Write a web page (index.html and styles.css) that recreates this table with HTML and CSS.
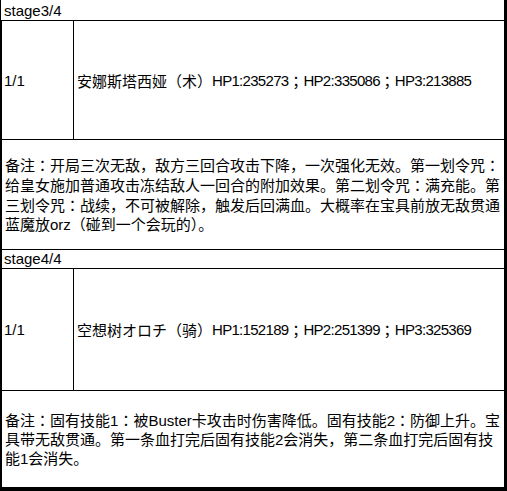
FILE: index.html
```html
<!DOCTYPE html>
<html lang="zh-CN">
<head>
<meta charset="utf-8">
<link rel="stylesheet" href="styles.css">
</head>
<body>
<div class="sheet">
  <div class="stage first">stage3/4</div>
  <div class="data row-a">
    <div class="idx">1/1</div>
    <div class="name">安娜斯塔西娅（术）<span class="num">HP1:235273</span><span class="pc" lang="zh-TW">；</span><span class="num">HP2:335086</span><span class="pc" lang="zh-TW">；</span><span class="num">HP3:213885</span></div>
  </div>
  <div class="note note-a">
    <p>备注<span class="pc" lang="zh-TW">：</span>开局三次无敌，敌方三回合攻击下降，一次强化无效。第一划令咒<span class="pc" lang="zh-TW">：</span><br>给皇女施加普通攻击冻结敌人一回合的附加效果。第二划令咒<span class="pc" lang="zh-TW">：</span>满充能。第<br>三划令咒<span class="pc" lang="zh-TW">：</span>战续，不可被解除，触发后回满血。大概率在宝具前放无敌贯通<br>蓝魔放orz（碰到一个会玩的）。</p>
  </div>
  <div class="stage">stage4/4</div>
  <div class="data row-b">
    <div class="idx">1/1</div>
    <div class="name">空想树オロチ（骑）<span class="num">HP1:152189</span><span class="pc" lang="zh-TW">；</span><span class="num">HP2:251399</span><span class="pc" lang="zh-TW">；</span><span class="num">HP3:325369</span></div>
  </div>
  <div class="note note-b">
    <p>备注<span class="pc" lang="zh-TW">：</span>固有技能1<span class="pc" lang="zh-TW">：</span>被Buster卡攻击时伤害降低。固有技能2<span class="pc" lang="zh-TW">：</span>防御上升。宝<br>具带无敌贯通。第一条血打完后固有技能2会消失，第二条血打完后固有技<br>能1会消失。</p>
  </div>
</div>
</body>
</html>
```
FILE: styles.css
```css
html, body {
  margin: 0;
  padding: 0;
  background: #fff;
}
body {
  font-family: "Liberation Sans", "Noto Sans CJK SC", sans-serif;
  font-size: 15px;
  color: #000;
}
.sheet {
  width: 507px;
  height: 491px;
  box-sizing: border-box;
  border-right: 3px solid #000;
  border-bottom: 4px solid #000;
  display: flex;
  flex-direction: column;
  overflow: hidden;
}
.stage {
  flex-shrink: 0;
  height: 18px;
  line-height: 18px;
  padding-left: 2px;
  border-left: 2px solid #000;
  border-bottom: 1px solid #000;
  white-space: nowrap;
}
.stage.first {
  height: 18px;
  padding-top: 2px;
  padding-left: 3px;
  border-left-width: 1px;
}
.data {
  flex-shrink: 0;
  display: flex;
  border-left: 2px solid #000;
  border-bottom: 1px solid #000;
}
.row-a { height: 118px; }
.row-b { height: 121px; }
.idx {
  width: 69px;
  padding-left: 2px;
  border-right: 1px solid #000;
  display: flex;
  align-items: center;
}
.name {
  flex: 1;
  padding-left: 3px;
  display: flex;
  align-items: center;
  white-space: nowrap;
}
.num {
  letter-spacing: -0.7px;
}
.pc {
  font-family: "Noto Sans CJK TC", "Noto Sans CJK SC", sans-serif;
}
.note {
  flex-shrink: 0;
  display: flex;
  align-items: center;
  padding-left: 3px;
  border-left: 2px solid #000;
  border-bottom: 1px solid #000;
}
.note p {
  margin: 0;
  line-height: 19px;
  white-space: nowrap;
}
.note-a { height: 109px; }
.note-b {
  height: 96px;
  border-bottom: none;
}
```
